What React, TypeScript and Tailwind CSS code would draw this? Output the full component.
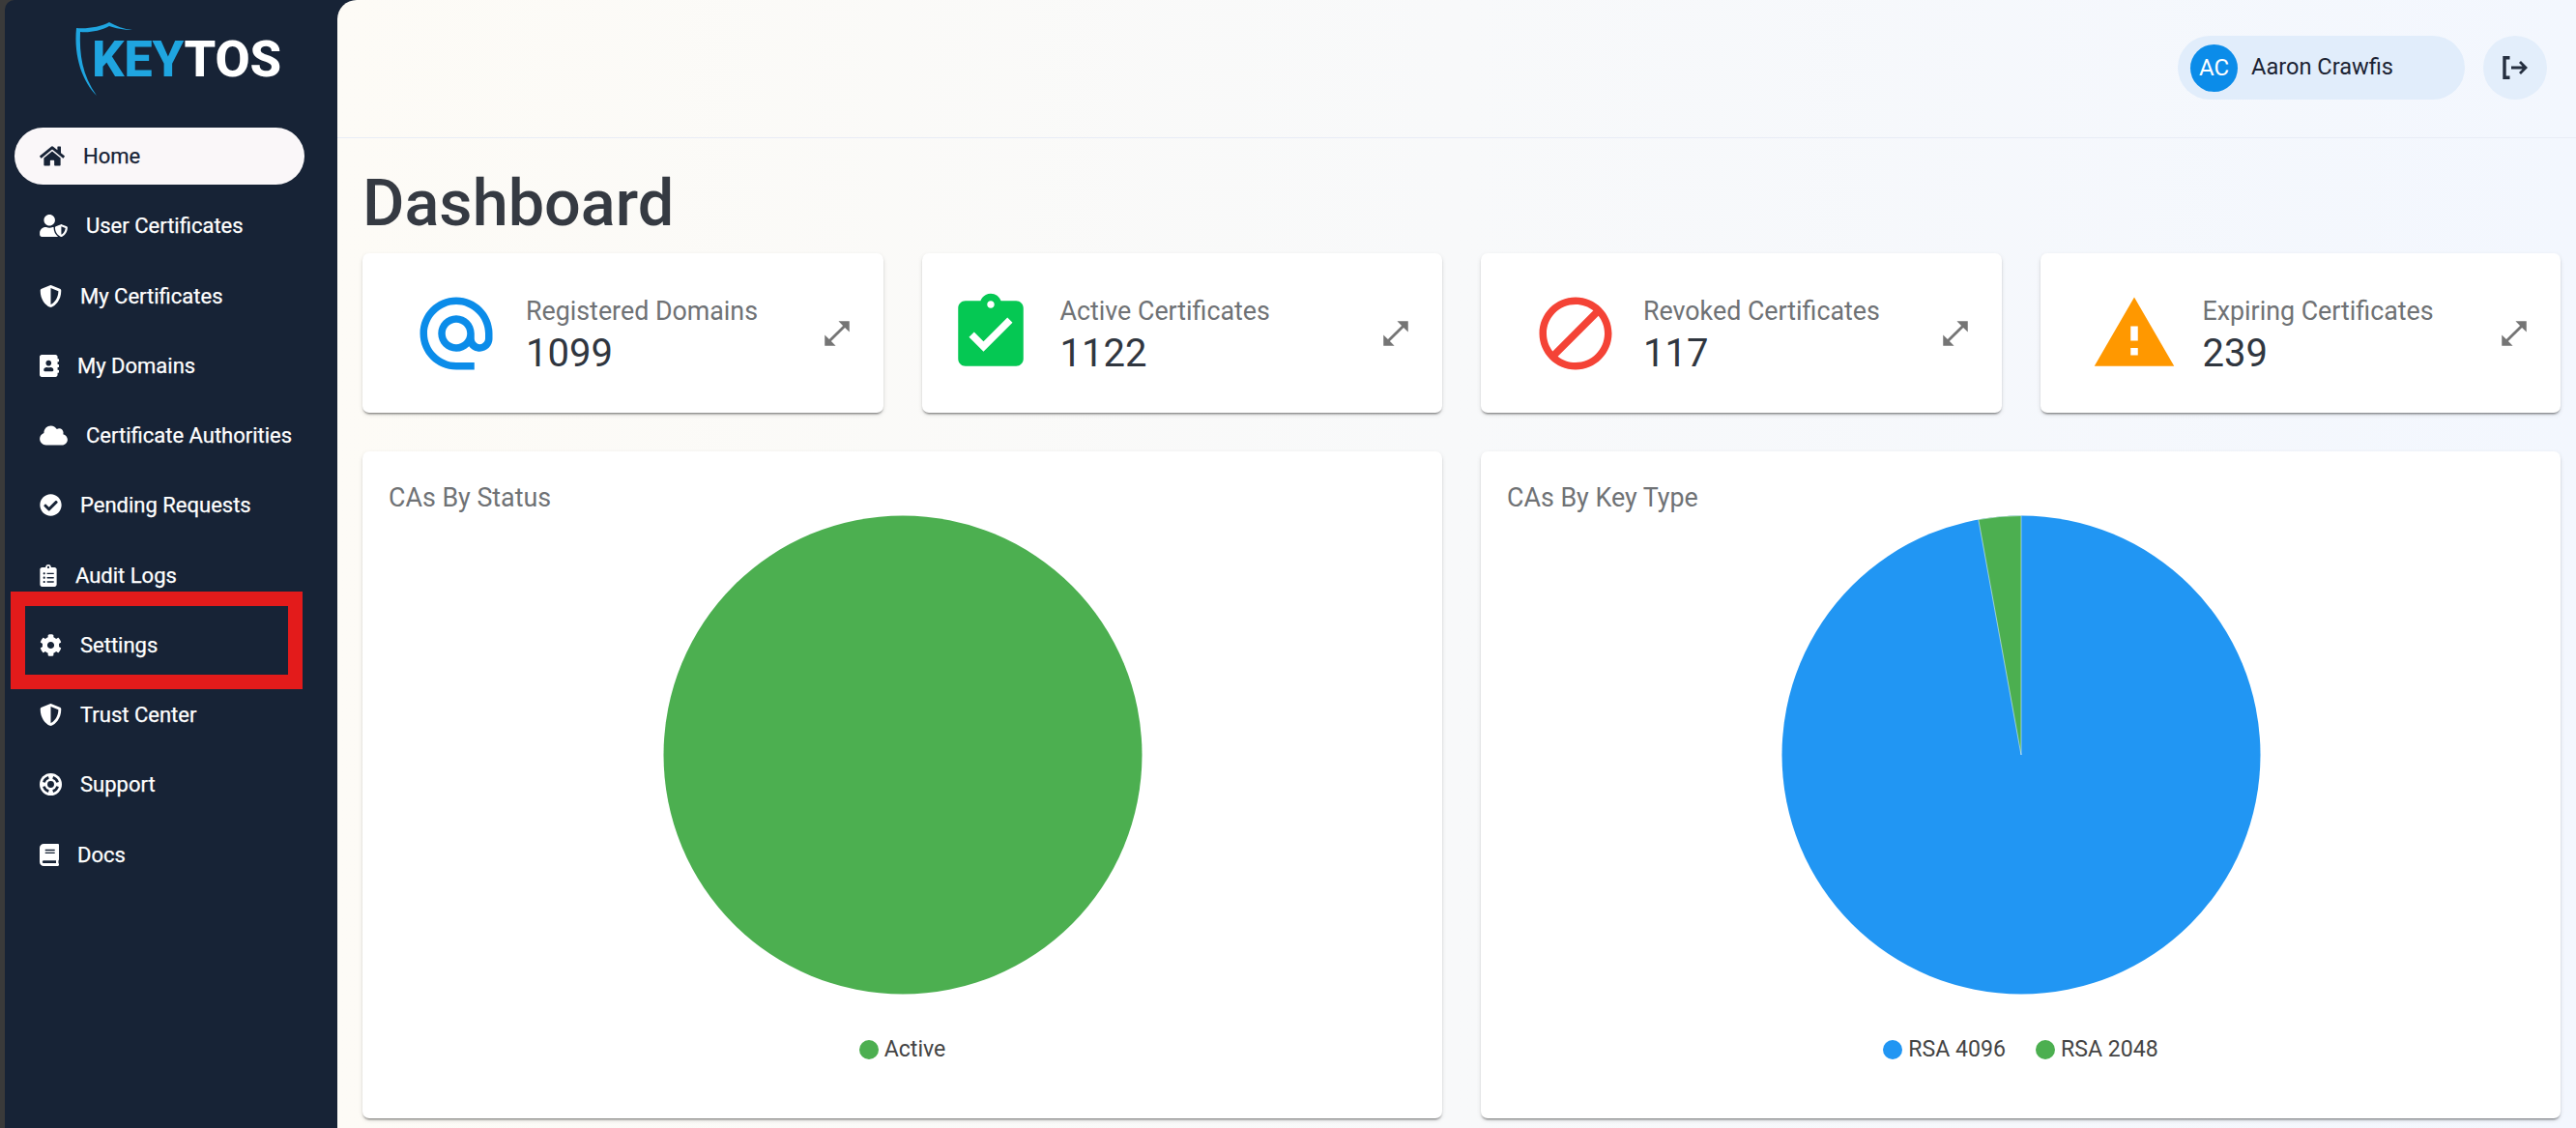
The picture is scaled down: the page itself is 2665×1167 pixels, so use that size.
import type { ReactNode } from "react";
import {
  FaHome,
  FaUserShield,
  FaShieldAlt,
  FaAddressBook,
  FaCloud,
  FaCheckCircle,
  FaClipboardList,
  FaCog,
  FaBook,
} from "react-icons/fa";

function LifeRing({ className }: { className?: string }) {
  return (
    <svg viewBox="0 0 24 24" className={className}>
      <circle cx="12" cy="12" r="12" fill="#ffffff" />
      <circle cx="12" cy="12" r="3.6" fill="#172336" />
      <path
        d="M14.28 4.54 A7.8 7.8 0 0 1 19.46 9.72 M19.46 14.28 A7.8 7.8 0 0 1 14.28 19.46 M9.72 19.46 A7.8 7.8 0 0 1 4.54 14.28 M4.54 9.72 A7.8 7.8 0 0 1 9.72 4.54"
        fill="none"
        stroke="#172336"
        strokeWidth="2.8"
      />
    </svg>
  );
}

const nav = [
  { label: "Home", Icon: FaHome, w: "h-[23px] w-[26px] shrink-0", active: true },
  { label: "User Certificates", Icon: FaUserShield, w: "h-[23px] w-[29px] shrink-0" },
  { label: "My Certificates", Icon: FaShieldAlt, w: "h-[23px] w-[23px] shrink-0" },
  { label: "My Domains", Icon: FaAddressBook, w: "h-[23px] w-[20px] shrink-0" },
  { label: "Certificate Authorities", Icon: FaCloud, w: "h-[23px] w-[29px] shrink-0" },
  { label: "Pending Requests", Icon: FaCheckCircle, w: "h-[23px] w-[23px] shrink-0" },
  { label: "Audit Logs", Icon: FaClipboardList, w: "h-[23px] w-[18px] shrink-0" },
  { label: "Settings", Icon: FaCog, w: "h-[23px] w-[23px] shrink-0" },
  { label: "Trust Center", Icon: FaShieldAlt, w: "h-[23px] w-[23px] shrink-0" },
  { label: "Support", Icon: LifeRing, w: "h-[23px] w-[23px] shrink-0" },
  { label: "Docs", Icon: FaBook, w: "h-[23px] w-[20px] shrink-0" },
];

function MuiIcon({ d, className }: { d: string; className: string }) {
  return (
    <svg viewBox="0 0 24 24" className={className} fill="currentColor">
      <path d={d} />
    </svg>
  );
}

const AT =
  "M12 2C6.48 2 2 6.48 2 12s4.48 10 10 10h5v-2h-5c-4.34 0-8-3.66-8-8s3.66-8 8-8 8 3.66 8 8v1.43c0 .79-.71 1.57-1.5 1.57s-1.5-.78-1.5-1.57V12c0-2.76-2.24-5-5-5s-5 2.24-5 5 2.24 5 5 5c1.38 0 2.64-.56 3.54-1.47.65.89 1.77 1.47 2.96 1.47 1.97 0 3.5-1.6 3.5-3.57V12c0-5.52-4.48-10-10-10zm0 13c-1.66 0-3-1.34-3-3s1.34-3 3-3 3 1.34 3 3-1.34 3-3 3z";
const CLIP =
  "M19 3h-4.18C14.4 1.84 13.3 1 12 1c-1.3 0-2.4.84-2.82 2H5c-1.1 0-2 .9-2 2v14c0 1.1.9 2 2 2h14c1.1 0 2-.9 2-2V5c0-1.1-.9-2-2-2zm-7 0c.55 0 1 .45 1 1s-.45 1-1 1-1-.45-1-1 .45-1 1-1zm-2 14l-4-4 1.41-1.41L10 14.17l6.59-6.59L18 9l-8 8z";
const BLOCK =
  "M12 2C6.48 2 2 6.48 2 12s4.48 10 10 10 10-4.48 10-10S17.52 2 12 2zM4 12c0-4.42 3.58-8 8-8 1.85 0 3.55.63 4.9 1.69L5.69 16.9C4.63 15.55 4 13.85 4 12zm8 8c-1.85 0-3.55-.63-4.9-1.69L18.31 7.1C19.37 8.45 20 10.15 20 12c0 4.42-3.58 8-8 8z";
const WARN = "M1 21h22L12 2 1 21zm12-3h-2v-2h2v2zm0-4h-2v-4h2v4z";
const EXPAND = "M21 11V3h-8l3.29 3.29-10 10L3 13v8h8l-3.29-3.29 10-10z";

const stats = [
  { label: "Registered Domains", value: "1099", d: AT, iconClass: "h-[90px] w-[90px] shrink-0 text-[#0b8ce9]", pad: "pl-[52px]", gap: "ml-[27px]" },
  { label: "Active Certificates", value: "1122", d: CLIP, iconClass: "h-[90px] w-[90px] shrink-0 text-[#05c853]", pad: "pl-[26px]", gap: "ml-[27px]" },
  { label: "Revoked Certificates", value: "117", d: BLOCK, iconClass: "h-[90px] w-[90px] shrink-0 text-[#f44336]", pad: "pl-[53px]", gap: "ml-[25px]" },
  { label: "Expiring Certificates", value: "239", d: WARN, iconClass: "h-[90px] w-[90px] shrink-0 text-[#ff9800]", pad: "pl-[52px]", gap: "ml-[26px]" },
];

const cardClass =
  "rounded-[7px] bg-white shadow-[0_3px_2px_-2px_rgba(0,0,0,0.35),0_2px_2px_0_rgba(0,0,0,0.14),0_2px_5px_0_rgba(0,0,0,0.1)]";

function Stat({ label, value, d, iconClass, pad, gap }: (typeof stats)[number]) {
  return (
    <div className={`flex h-[165px] items-center pr-[31px] ${cardClass} ${pad}`}>
      <MuiIcon d={d} className={iconClass} />
      <div className={`flex flex-col pt-[2px] ${gap}`}>
        <span className="text-[26.8px] leading-[38px] text-[#6f7275]">{label}</span>
        <span className="mt-[2px] text-[40px] leading-[46px] text-[#30363f]">{value}</span>
      </div>
      <MuiIcon d={EXPAND} className="ml-auto h-[34px] w-[34px] shrink-0 text-[#757575]" />
    </div>
  );
}

function ChartCard({ title, legend, children }: { title: string; legend: { label: string; dot: string }[]; children: ReactNode }) {
  return (
    <div className={`flex h-[690px] flex-col ${cardClass}`}>
      <div className="px-[27px] pt-[31px] text-[26.8px] leading-[35px] text-[#6f7275]">{title}</div>
      <div className="flex justify-center">{children}</div>
      <div className="mt-[43px] flex items-center justify-center gap-[31px]">
        {legend.map((l) => (
          <div key={l.label} className="flex items-center gap-[6px]">
            <span className={`h-[20px] w-[20px] rounded-full ${l.dot}`} />
            <span className="text-[23.1px] leading-[27px] text-[#444444]">{l.label}</span>
          </div>
        ))}
      </div>
    </div>
  );
}

export default function App() {
  return (
    <div className="relative flex h-[1167px] w-full overflow-hidden bg-[#3a3a3a] font-['Roboto',sans-serif]">
      <div className="ml-[5px] flex flex-1 rounded-tl-[10px] bg-[#172336]">
        <aside className="w-[344px] shrink-0">
          <div className="relative h-[132px] pl-[90px] pt-[35px]">
            <svg viewBox="0 0 70 84" className="absolute left-[69px] top-[20px] h-[84px] w-[70px]" fill="#1fa5e0">
              <path d="M5 9 C16 10 30 8 39 3 C46 7 54 10 63 11 C54 11 45 9 39 7 C30 12 18 14 9 13 C8 36 11 58 26 79 C12 65 2 40 5 9 Z" />
            </svg>
            <div className="text-[52.5px] font-extrabold leading-[52px] tracking-[-0.2px]">
              <span className="text-[#1fa5e0]">KEY</span>
              <span className="text-white">TOS</span>
            </div>
          </div>
          <nav className="flex flex-col gap-[13.25px] pl-[10px]">
            {nav.map(({ label, Icon, w, active }) => (
              <div
                key={label}
                className={
                  active
                    ? "flex h-[59px] w-[300px] items-center gap-[19px] rounded-full bg-[#faf7f9] pl-[26px] text-[#172336]"
                    : "flex h-[59px] w-[300px] items-center gap-[19px] pl-[26px] text-white"
                }
              >
                <Icon className={w} />
                <span className="pt-[1px] text-[22px] leading-[26px] [-webkit-text-stroke:0.25px_currentColor]">{label}</span>
              </div>
            ))}
          </nav>
        </aside>

        <main className="flex-1 rounded-tl-[20px] bg-gradient-to-r from-[#fdfbf6] to-[#f3f7fe]">
          <header className="flex h-[143px] items-start justify-end gap-[19px] border-b border-[#e8ecf6] pr-[30px] pt-[37px]">
            <div className="flex h-[66px] w-[297px] items-center gap-[14px] rounded-full bg-[#e1edfb] pl-[13px]">
              <div className="flex h-[49px] w-[49px] items-center justify-center rounded-full bg-[#0b8ce9] text-[24px] text-white">AC</div>
              <span className="text-[23.6px] text-[#1b2333]">Aaron Crawfis</span>
            </div>
            <button className="flex h-[66px] w-[66px] items-center justify-center rounded-full bg-[#e3eefb]">
              <svg viewBox="0 0 26 24" className="h-[24px] w-[26px]" fill="none" stroke="#252f40" strokeWidth="3.4">
                <path d="M7.5 1.7 H2 V22.3 H7.5" />
                <path d="M9 12 H24 M18 6 L24 12 L18 18" strokeWidth="2.8" />
              </svg>
            </button>
          </header>

          <div className="pl-[26px] pr-[16px]">
            <h1 className="h-[119px] pt-[28px] text-[66.6px] font-medium leading-[78px] text-[#353a42]">Dashboard</h1>
            <div className="grid grid-cols-4 gap-[40px]">
              {stats.map((s) => (
                <Stat key={s.label} {...s} />
              ))}
            </div>
            <div className="mt-[40px] grid grid-cols-2 gap-[40px]">
              <ChartCard title="CAs By Status" legend={[{ label: "Active", dot: "bg-[#4caf50]" }]}>
                <svg viewBox="0 0 496 496" className="h-[496px] w-[496px]">
                  <circle cx="248" cy="248" r="247.5" fill="#4caf50" />
                </svg>
              </ChartCard>
              <ChartCard
                title="CAs By Key Type"
                legend={[
                  { label: "RSA 4096", dot: "bg-[#2196f3]" },
                  { label: "RSA 2048", dot: "bg-[#4caf50]" },
                ]}
              >
                <svg viewBox="0 0 496 496" className="h-[496px] w-[496px]">
                  <circle cx="248" cy="248" r="247.5" fill="#2196f3" />
                  <path d="M248 248 L248 0.5 A247.5 247.5 0 0 0 203.8 4.5 Z" fill="#4caf50" stroke="#ffffff" strokeOpacity="0.5" strokeWidth="1" />
                </svg>
              </ChartCard>
            </div>
          </div>
        </main>
      </div>

      <div className="pointer-events-none absolute left-[11px] top-[612px] h-[101px] w-[302px] border-[15px] border-[#e31b1b]" />
    </div>
  );
}
